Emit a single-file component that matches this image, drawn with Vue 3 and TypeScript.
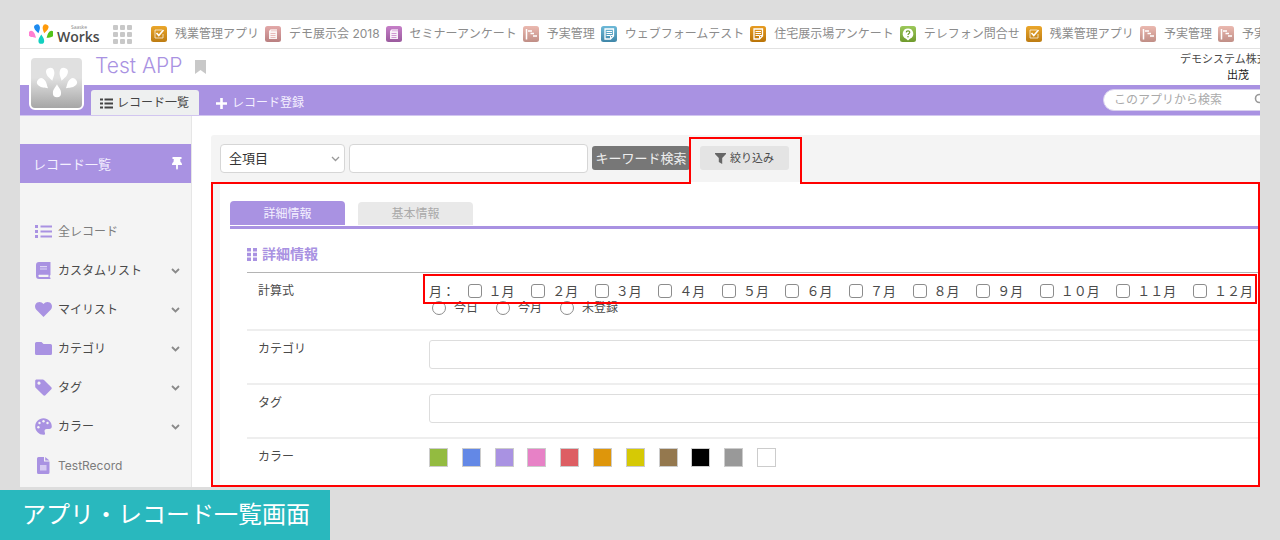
<script setup lang="ts">
import { ref } from 'vue'

interface Drop { x: number; y: number; r: number; color: string }
interface Favorite { kind: string; from: string; to: string; label: string }
interface MenuItem { icon: string; label: string; open: boolean; muted: boolean }

const drops: Drop[] = [
  { x: 12, y: 28, r: -50, color: '#ff7fd2' },
  { x: 20, y: 18, r: -14, color: '#1d8bf0' },
  { x: 33, y: 18, r: 14, color: '#ff9a0a' },
  { x: 41, y: 28, r: 50, color: '#52c41a' },
  { x: 26.5, y: 35, r: 180, color: '#12d0c0' },
]

const favorites: Favorite[] = [
  { kind: 'check', from: '#eba72b', to: '#bd7c12', label: '残業管理アプリ' },
  { kind: 'card', from: '#e3a9a9', to: '#b97f80', label: 'デモ展示会 2018' },
  { kind: 'card', from: '#c67fc8', to: '#9a5a9d', label: 'セミナーアンケート' },
  { kind: 'gantt', from: '#ebb9b0', to: '#c08e86', label: '予実管理' },
  { kind: 'note', from: '#6db9d8', to: '#3f86a8', label: 'ウェブフォームテスト' },
  { kind: 'note', from: '#e79c22', to: '#b97408', label: '住宅展示場アンケート' },
  { kind: 'help', from: '#9cc85a', to: '#6f9a2c', label: 'テレフォン問合せ' },
  { kind: 'check', from: '#eba72b', to: '#bd7c12', label: '残業管理アプリ' },
  { kind: 'gantt', from: '#ebb9b0', to: '#c08e86', label: '予実管理' },
  { kind: 'gantt', from: '#ebb9b0', to: '#c08e86', label: '予実管理' },
]

const menu: MenuItem[] = [
  { icon: 'list', label: '全レコード', open: false, muted: true },
  { icon: 'book', label: 'カスタムリスト', open: true, muted: false },
  { icon: 'heart', label: 'マイリスト', open: true, muted: false },
  { icon: 'folder', label: 'カテゴリ', open: true, muted: false },
  { icon: 'tag', label: 'タグ', open: true, muted: false },
  { icon: 'palette', label: 'カラー', open: true, muted: false },
  { icon: 'file', label: 'TestRecord', open: false, muted: true },
]

const months = ['１月', '２月', '３月', '４月', '５月', '６月', '７月', '８月', '９月', '１０月', '１１月', '１２月']
const periods = ['今日', '今月', '未登録']
const colors = ['#93bb40', '#6388e6', '#a992e2', '#e781c6', '#dd5e63', '#de960b', '#d6c905', '#94784e', '#000000', '#999999', '#ffffff']

const field = ref('all')
const keyword = ref('')
const appQuery = ref('')
const category = ref('')
const tag = ref('')
const picked = ref<string[]>([])
const period = ref('')
</script>

<template>
  <div class="frame">
    <nav class="topbar" aria-label="アプリ">
      <a class="brand" href="#">
        <svg class="brand-mark" viewBox="7 10 38 33" aria-hidden="true">
          <path v-for="d in drops" :key="d.color" :fill="d.color" :transform="`translate(${d.x} ${d.y}) rotate(${d.r}) scale(.95)`"
            d="M0 8C-2 4 -5 2 -5 -3A5 5 0 0 1 5 -3C5 2 2 4 0 8Z" />
        </svg>
        <span class="brand-name"><small>Saaske</small>Works</span>
      </a>
      <button class="grid-btn" type="button" aria-label="アプリ一覧"><i v-for="n in 9" :key="n"></i></button>
      <a v-for="(f, i) in favorites" :key="i" class="fav" href="#">
        <svg class="fav-icon" viewBox="0 0 16 16" aria-hidden="true">
          <defs>
            <linearGradient :id="`fav${i}`" x1="0" y1="0" x2="0" y2="1">
              <stop offset="0" :stop-color="f.from" /><stop offset="1" :stop-color="f.to" />
            </linearGradient>
          </defs>
          <rect width="16" height="16" rx="2.5" :fill="`url(#fav${i})`" />
          <g v-if="f.kind === 'check'" fill="none" stroke="#fff">
            <path d="M11 4H4v8h8V8" stroke-opacity=".7" /><path d="M5.500 7l2.300 2.600L12.500 4" stroke-width="1.600" />
          </g>
          <g v-else-if="f.kind === 'card'">
            <path d="M6 3h6v10H4V5z" fill="#fff" fill-opacity=".9" />
            <path d="M7 3v2.400M9 3v2.400M11 3v2.400M5.500 7.500h5M5.500 9.500h5M5.500 11.500h5" :stroke="f.from" stroke-width=".8" />
          </g>
          <path v-else-if="f.kind === 'gantt'" d="M3.500 3v10.500M5 5h4M7.500 7.500h3.500M10 10h4" fill="none" stroke="#fff" stroke-width="1.500" />
          <g v-else-if="f.kind === 'note'" fill="none" stroke="#fff">
            <path d="M4 3h8.500v7l-3 3H4z" stroke-width="1.300" /><path d="M5.500 5.500h5.500M5.500 7.500h5.500M5.500 9.500h3.500M12 9.500H9.500V13" />
          </g>
          <g v-else>
            <path d="M8 2.500a5.300 5.300 0 0 0-2 10.200L8 14.500l2-1.800A5.300 5.300 0 0 0 8 2.500z" fill="#fff" />
            <path d="M6.200 6.400C6.300 4.300 9.800 4.300 9.800 6.300 9.800 7.500 8 7.500 8 9" fill="none" :stroke="f.to" stroke-width="1.200" />
            <circle cx="8" cy="10.700" r=".8" :fill="f.to" />
          </g>
        </svg>
        <span>{{ f.label }}</span>
      </a>
    </nav>

    <header class="header">
      <svg class="app-icon" viewBox="0 0 52 52" aria-hidden="true">
        <path v-for="d in drops" :key="d.color" fill="#fff" :transform="`translate(${d.x} ${d.y - 1}) rotate(${d.r}) scale(.85)`"
          d="M0 8C-2 4 -5 2 -5 -3A5 5 0 0 1 5 -3C5 2 2 4 0 8Z" />
      </svg>
      <div class="title-row">
        <h1>Test APP</h1>
        <button class="mark" type="button" aria-label="ブックマーク">
          <svg viewBox="0 0 11 14"><path d="M0 0h11v14L5.500 10 0 14z" fill="#c8c8c8" /></svg>
        </button>
        <p class="user"><span>デモシステム株式</span><b>出茂</b></p>
      </div>
      <div class="bar">
        <a class="tab active" href="#">
          <svg class="tab-icon" viewBox="0 0 13 11" aria-hidden="true"><path d="M0 1.500h3M0 5.500h3M0 9.500h3M4.500 1.500H13M4.500 5.500H13M4.500 9.500H13" stroke="#444" stroke-width="2" /></svg>
          <span>レコード一覧</span>
        </a>
        <a class="tab" href="#">
          <svg class="tab-icon" viewBox="0 0 13 13" aria-hidden="true"><path d="M6.500 1v11M1 6.500h11" stroke="#fff" stroke-width="2.600" /></svg>
          <span>レコード登録</span>
        </a>
        <label class="app-search">
          <input v-model="appQuery" type="text" placeholder="このアプリから検索" aria-label="このアプリから検索">
          <svg viewBox="0 0 14 14" aria-hidden="true"><circle cx="5.500" cy="5.500" r="4" fill="none" stroke="#999" stroke-width="1.600" /><path d="M8.500 8.500l4 4" stroke="#999" stroke-width="1.800" /></svg>
        </label>
      </div>
    </header>

    <div class="body">
      <aside class="sidebar">
        <div class="side-head">
          <span>レコード一覧</span>
          <svg viewBox="0 0 10 13" aria-hidden="true"><path d="M.5 0h9v2H8.200L8.500 5C9.600 5.700 10 6.700 10 8H5.900v3.500L5 13l-.9-1.500V8H0c0-1.300.400-2.300 1.500-3L1.800 2H.5z" fill="#fff" /></svg>
        </div>
        <ul>
          <li v-for="m in menu" :key="m.label">
            <a href="#" :class="{ muted: m.muted }">
              <svg class="side-icon" viewBox="0 0 17 17" fill="#a992e2" aria-hidden="true">
                <path v-if="m.icon === 'list'" d="M0 2h3v3H0zM0 7h3v3H0zM0 12h3v3H0zM5.500 2.500H17v2H5.500zM5.500 7.500H17v2H5.500zM5.500 12.500H17v2H5.500z" />
                <g v-else-if="m.icon === 'book'">
                  <path d="M4 0h11.500v13l-.8.7v1.600l.8.500V17H4a3 3 0 0 1-3-3V3a3 3 0 0 1 3-3z" />
                  <path d="M5 4.700h7M5 7h7" stroke="#ded5f5" stroke-width="1.200" /><path d="M13.500 12.700H4.200a1.200 1.200 0 0 0 0 2.300h9.300z" fill="#f4f4f4" />
                </g>
                <path v-else-if="m.icon === 'heart'" d="M8.500 16L1.300 8.700C-.8 6.400-.2 3 2.200 1.600 4.500.4 6.900 1 8.500 3.100 10.100 1 12.500.4 14.800 1.600 17.200 3 17.800 6.400 15.700 8.700z" />
                <path v-else-if="m.icon === 'folder'" d="M1.500 2h5l2 2h7A1.500 1.500 0 0 1 17 5.500v8a1.500 1.500 0 0 1-1.500 1.500h-14A1.500 1.500 0 0 1 0 13.500v-10A1.500 1.500 0 0 1 1.500 2z" />
                <path v-else-if="m.icon === 'tag'" fill-rule="evenodd" d="M1.500.5h6.300c.5 0 .9.200 1.200.500l7.300 7.200c.6.600.6 1.500 0 2.100l-5.900 6c-.6.600-1.500.6-2.100 0L.9 9.100A2 2 0 0 1 .2 7.800V1.800C.2 1.100.800.500 1.500.500zM4 2.600a1.600 1.600 0 1 0 .01 0z" />
                <g v-else-if="m.icon === 'palette'">
                  <path d="M8.500.2C3.800.2.200 4 .2 8.500s3.600 8.300 8.300 8.300c1.500 0 1.900-1.200 1.300-2.400-.8-1.700.1-3.300 1.900-3.300h2.600c1.500 0 2.500-1.100 2.500-2.500C16.800 3.900 13.200.200 8.500.200z" />
                  <g fill="#f4f4f4"><circle cx="3.400" cy="9.300" r="1.200" /><circle cx="4.500" cy="5" r="1.200" /><circle cx="8.500" cy="3.200" r="1.200" /><circle cx="12.500" cy="5" r="1.200" /></g>
                </g>
                <g v-else>
                  <path d="M3.500 0H9v4.500h5.500v11A1.500 1.500 0 0 1 13 17H3.500A1.500 1.500 0 0 1 2 15.500v-14A1.500 1.500 0 0 1 3.500 0zM10.200 0l4.300 3.500h-4.300z" />
                  <path d="M5 8h6.500v5.500H5z" fill="#d6caf2" />
                </g>
              </svg>
              <span>{{ m.label }}</span>
              <svg v-if="m.open" class="chev" viewBox="0 0 9 6" aria-hidden="true"><path d="M1 1l3.500 3.500L8 1" fill="none" stroke="#8a8a8a" stroke-width="1.800" /></svg>
            </a>
          </li>
        </ul>
      </aside>

      <main class="main">
        <form class="search" @submit.prevent>
          <span class="select">
            <select v-model="field" aria-label="検索項目"><option value="all">全項目</option></select>
            <svg viewBox="0 0 9 6" aria-hidden="true"><path d="M1 1l3.500 3.500L8 1" fill="none" stroke="#999" stroke-width="1.300" /></svg>
          </span>
          <input v-model="keyword" class="keyword" type="text" aria-label="キーワード">
          <button class="go" type="submit">キーワード検索</button>
          <span class="filter-tab">
            <button class="filter" type="button">
              <svg viewBox="0 0 11 11" aria-hidden="true"><path d="M0 0h11v1L7.200 5v6L3.800 9V5L0 1z" fill="#666" /></svg>
              絞り込み
            </button>
          </span>
        </form>

        <section class="panel">
          <div class="sheet">
            <div class="tabs" role="tablist">
              <button type="button" role="tab" aria-selected="true" class="on">詳細情報</button>
              <button type="button" role="tab" aria-selected="false">基本情報</button>
            </div>
            <div class="section">
              <h2>
                <svg viewBox="0 0 10 13" fill="#a992e2" aria-hidden="true"><path d="M0 0h4v3.500H0zM6 0h4v3.500H6zM0 4.800h4v3.500H0zM6 4.800h4v3.500H6zM0 9.500h4V13H0zM6 9.500h4V13H6z" /></svg>
                詳細情報
              </h2>
              <div class="row tall">
                <span class="name">計算式</span>
                <div class="value">
                  <div class="months">
                    <span>月：</span>
                    <label v-for="m in months" :key="m"><input v-model="picked" type="checkbox" :value="m">{{ m }}</label>
                  </div>
                  <div class="periods">
                    <label v-for="p in periods" :key="p"><input v-model="period" type="radio" name="period" :value="p">{{ p }}</label>
                  </div>
                </div>
              </div>
              <div class="row">
                <label class="name" for="category">カテゴリ</label>
                <input id="category" v-model="category" class="text" type="text">
              </div>
              <div class="row">
                <label class="name" for="tag">タグ</label>
                <input id="tag" v-model="tag" class="text" type="text">
              </div>
              <div class="row last">
                <span class="name">カラー</span>
                <div class="swatches">
                  <button v-for="c in colors" :key="c" type="button" :aria-label="c" :style="{ backgroundColor: c }"></button>
                </div>
              </div>
            </div>
          </div>
        </section>
      </main>
    </div>
  </div>
  <p class="caption">アプリ・レコード一覧画面</p>
</template>

<style>
body {
  background: #ddd;
  font-family: Inter, "Noto Sans CJK JP", sans-serif;
  font-size: 12px;
  line-height: 16px;
  color: #4a4a4a;
}
</style>

<style scoped>
* { box-sizing: border-box; }
a { color: inherit; text-decoration: none; }
button, input, select { font: inherit; color: inherit; margin: 0; padding: 0; border: 0; background: none; }
svg { display: block; flex: none; }

.frame { margin: 20px 20px 0; background: #fff; overflow: hidden; }

.topbar { display: flex; align-items: center; height: 29px; padding-left: 9px; border-bottom: 1px solid #e2e2e2; white-space: nowrap; color: #8c8c8c; }
.brand { display: flex; align-items: center; gap: 4px; flex: none; }
.brand-mark { width: 24px; height: 20px; }
.brand-name { display: flex; flex-direction: column; width: 44px; font: 600 14px/14px "Open Sans", sans-serif; color: #4a4a4a; }
.brand-name small { font-size: 5px; line-height: 5px; font-weight: 400; text-align: center; color: #888; }
.grid-btn { display: grid; grid-template-columns: repeat(3, 5px); grid-auto-rows: 5px; gap: 2px; margin: 0 19px 0 12px; flex: none; }
.grid-btn i { background: #c8c8c8; border-radius: 1px; }
.fav { display: flex; align-items: center; gap: 8px; margin-right: 6px; flex: none; }
.fav-icon { width: 16px; height: 16px; }

.header { position: relative; }
.app-icon { position: absolute; left: 9px; top: 7px; width: 55px; height: 54px; border: 2px solid #fff; border-radius: 6px; background: linear-gradient(#e0e0e0 40%, #a6a6a6); }
.title-row { display: flex; align-items: flex-start; height: 36px; padding-left: 75px; }
h1 { margin: 4px 0 0; font-size: 21px; line-height: 26px; font-weight: 300; color: #a992e2; }
.mark { margin: 11px 0 0 13px; }
.mark svg { width: 11px; height: 14px; }
.user { flex: none; display: flex; flex-direction: column; width: 100px; margin: 2px -20px 0 auto; white-space: nowrap; font-size: 11px; }
.user b { font-weight: 400; color: #222; padding-left: 47px; }
.bar { display: flex; align-items: flex-end; height: 31px; padding-left: 71px; background: #a992e2; border-bottom: 1px solid #d2c6f0; }
.tab { display: flex; align-items: center; gap: 4px; height: 25px; padding: 1px 10px 0 9px; border-radius: 3px 3px 0 0; color: #f4f0ff; white-space: nowrap; }
.tab.active { background: #eef0f0; color: #444; margin-right: 7px; }
.tab-icon { width: 13px; height: 13px; }
.app-search { display: flex; align-items: center; width: 190px; height: 22px; margin: 0 -33px 4px auto; padding: 0 24px 0 10px; border: 1px solid #d8d0ee; border-radius: 11px; background: #fff; }
.app-search input { flex: 1; min-width: 0; outline: 0; }
.app-search input::placeholder { color: #aaa; }
.app-search svg { width: 14px; height: 14px; }

.body { display: flex; }
.sidebar { flex: none; width: 172px; padding-top: 28px; background: #f4f4f4; border-right: 1px solid #e6e6e6; }
.side-head { display: flex; align-items: center; justify-content: space-between; height: 39px; padding: 0 9px 0 13px; background: #a992e2; color: #f4f0ff; font-size: 13px; }
.side-head svg { width: 10px; height: 13px; }
ul { list-style: none; margin: 29px 0 0; padding: 0; }
li a { display: flex; align-items: center; height: 39px; gap: 6px; padding: 0 11px 0 15px; }
li a.muted { color: #7c7c7c; }
.side-icon { width: 17px; height: 17px; }
.chev { width: 9px; height: 6px; margin-left: auto; }

.main { flex: 1; min-width: 0; padding: 19px 0 0 19px; }
.search { display: flex; align-items: flex-start; height: 47px; padding-left: 9px; background: #f4f4f4; border-radius: 3px 0 0; }
.select { position: relative; width: 125px; margin: 9px 4px 0 0; }
.select select { display: block; width: 100%; height: 29px; padding: 0 8px 2px; appearance: none; border: 1px solid #d6d6d6; border-radius: 4px; background: #fff; font-size: 13px; color: #333; }
.select svg { position: absolute; right: 5px; top: 12px; width: 9px; height: 6px; pointer-events: none; }
.keyword { width: 239px; height: 29px; margin: 9px 4px 0 0; padding: 0 8px; border: 1px solid #d6d6d6; border-radius: 4px; background: #fff; }
.go { width: 98px; height: 24px; margin-top: 11px; border-radius: 3px; background: #777; color: #eee; font-size: 13px; white-space: nowrap; }
.filter-tab { position: relative; z-index: 1; width: 113px; height: 47px; margin: 2px 0 -2px -1px; padding: 7px 0 0 9px; border: 2px solid #f00; border-bottom: 0; background: linear-gradient(#f4f4f4, #f4f4f4) 0 0 / 100% 43px no-repeat padding-box #fff; }
.filter { display: flex; align-items: center; gap: 4px; height: 24px; width: 89px; padding-left: 15px; border-radius: 3px; background: #e4e4e4; font-size: 11px; white-space: nowrap; }
.filter svg { width: 11px; height: 11px; }

.panel { padding-left: 7px; border: 2px solid #f00; background: #f4f4f4; overflow: hidden; }
.sheet { padding: 17px 0 0; background: #fff; }
.tabs { display: flex; align-items: flex-end; gap: 13px; height: 28px; margin-left: 10px; border-bottom: 3px solid #a992e2; }
.tabs button { width: 115px; height: 23px; padding-top: 1px; margin-bottom: 1px; border-radius: 4px 4px 0 0; background: #e9e9e9; color: #aaa; }
.tabs .on { height: 24px; background: #a992e2; color: #f4f0ff; }
.section { margin-left: 27px; }
h2 { display: flex; align-items: center; gap: 5px; margin: 0; padding: 15px 0 8px; border-bottom: 1px solid #b4b4b4; font-size: 14px; line-height: 20px; font-weight: 600; color: #a992e2; }
h2 svg { width: 10px; height: 13px; }
.row { display: grid; grid-template-columns: 171px minmax(0, 1fr); align-items: start; height: 54px; padding: 9px 0 0 11px; border-top: 2px solid #eee; }
.name { padding-top: 1px; }
.row.tall { height: 56px; padding-top: 1px; border-top: 0; }
.row.tall .name { padding-top: 9px; }
.row.last { height: 48px; }
.text { height: 29px; margin-right: -12px; padding: 0 8px; border: 1px solid #ddd; border-radius: 3px; }
.months { position: relative; z-index: 1; display: flex; align-items: center; justify-content: space-between; height: 30px; margin: 0 1px 0 -6px; padding: 4px 2px 0 4px; border: 2px solid #f00; font-size: 13px; white-space: nowrap; }
.months span { width: 22px; }
.months label { display: flex; align-items: center; gap: 7px; }
.periods { display: flex; gap: 18px; margin-top: -4px; padding-left: 3px; white-space: nowrap; }
.periods label { display: flex; align-items: center; gap: 8px; }
.value input { appearance: none; width: 14px; height: 14px; border: 1px solid #8c8c8c; background: #fff; }
.value input[type="checkbox"] { border-radius: 3px; }
.value input[type="radio"] { border-radius: 50%; }
.value input:checked { background: #a992e2; }
.swatches { display: flex; justify-content: space-between; max-width: 347px; }
.swatches button { width: 19px; height: 19px; border: 1px solid #ccc; }

.caption { width: fit-content; margin: 3px 0 0; padding: 0 20px 0 22px; background: #29b8be; color: #fff; font-size: 24px; line-height: 50px; }
</style>
